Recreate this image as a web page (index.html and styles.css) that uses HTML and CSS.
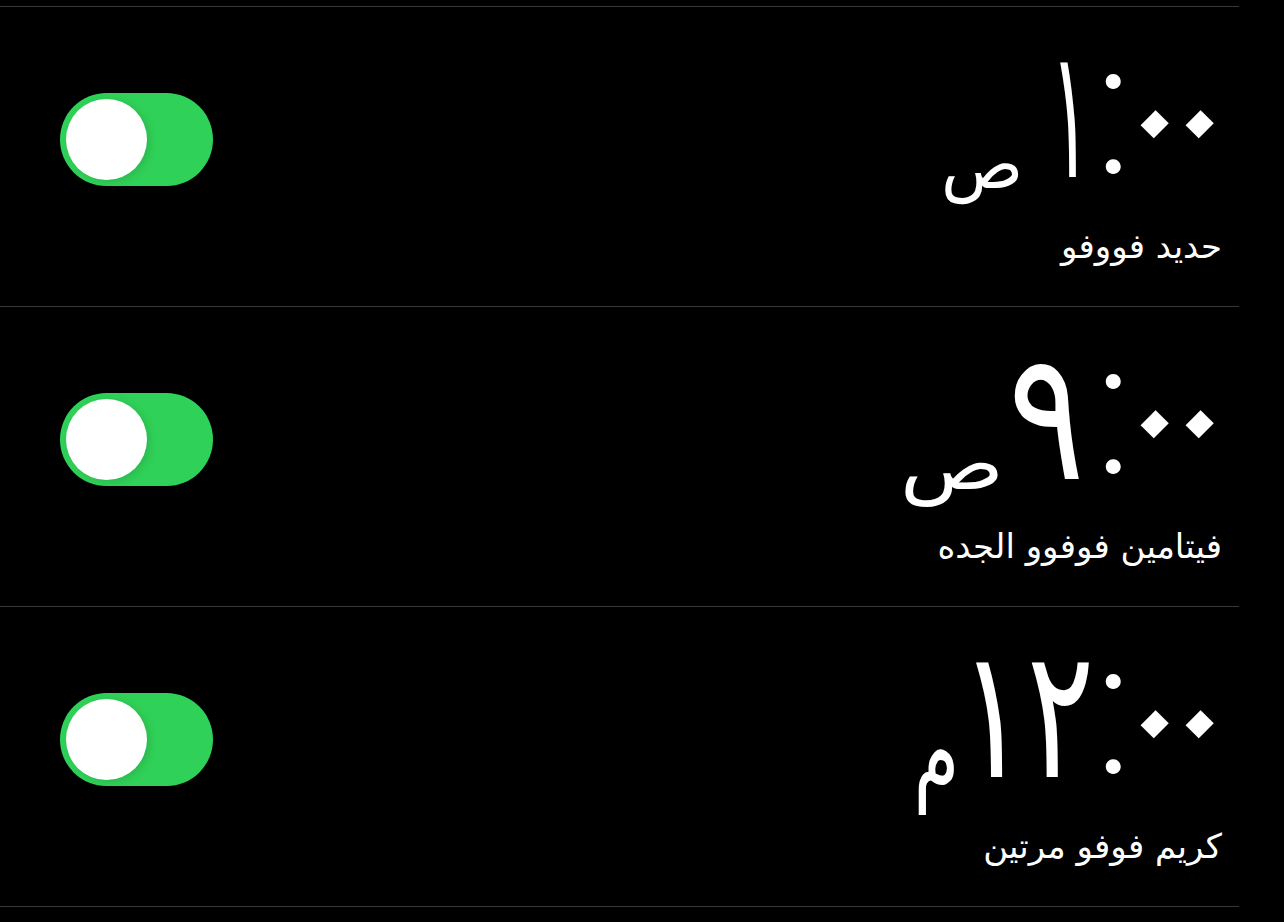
FILE: index.html
```html
<!DOCTYPE html>
<html lang="ar">
<head>
<meta charset="utf-8">
<link rel="stylesheet" href="styles.css">
</head>
<body>
<div class="list">
  <div class="row">
    <div class="toggle"><div class="knob"></div></div>
    <div class="info">
      <div class="time g1"><span class="num"><span class="hbox"><span class="h">١</span></span><span class="colon">:</span><span class="zbox"><span class="z">٠</span></span><span class="zbox"><span class="z">٠</span></span></span><span class="ap"><span class="apg">ص</span></span></div>
      <div class="label">حديد فووفو</div>
    </div>
  </div>
  <div class="row">
    <div class="toggle"><div class="knob"></div></div>
    <div class="info">
      <div class="time g2"><span class="num"><span class="hbox"><span class="h">٩</span></span><span class="colon">:</span><span class="zbox"><span class="z">٠</span></span><span class="zbox"><span class="z">٠</span></span></span><span class="ap"><span class="apg">ص</span></span></div>
      <div class="label">فيتامين فوفوو الجده</div>
    </div>
  </div>
  <div class="row">
    <div class="toggle"><div class="knob"></div></div>
    <div class="info">
      <div class="time g3"><span class="num"><span class="hbox"><span class="h">١٢</span></span><span class="colon">:</span><span class="zbox"><span class="z">٠</span></span><span class="zbox"><span class="z">٠</span></span></span><span class="ap"><span class="apg">م</span></span></div>
      <div class="label">كريم فوفو مرتين</div>
    </div>
  </div>
</div>
</body>
</html>
```
FILE: styles.css
```css
html, body {
  margin: 0;
  padding: 0;
  background: #000;
}
body {
  padding-top: 6px;
  font-family: "DejaVu Sans", sans-serif;
  color: #fff;
}
.list {
  width: 1239px;
  border-bottom: 1px solid #383838;
}
.row {
  height: 299px;
  border-top: 1px solid #383838;
  display: flex;
  align-items: flex-start;
}
.toggle {
  margin-left: 60px;
  margin-top: 86px;
  width: 153px;
  height: 93px;
  border-radius: 47px;
  background: #30d158;
  position: relative;
  flex: none;
}
.knob {
  position: absolute;
  left: 6px;
  top: 6px;
  width: 81px;
  height: 81px;
  border-radius: 50%;
  background: #fff;
  box-shadow: 3px 2px 8px rgba(0,0,0,0.12);
}
.info {
  margin-left: auto;
  padding-right: 17px;
  display: flex;
  flex-direction: column;
  align-items: flex-start;
  direction: rtl;
}
.time {
  display: flex;
  direction: rtl;
  align-items: flex-end;
  height: 232px;
  white-space: nowrap;
}
.g1 { gap: 22px; }
.g2 { gap: 0; }
.g3 { gap: 12px; }
.num {
  display: flex;
  direction: ltr;
  unicode-bidi: isolate;
  align-items: center;
  height: 232px;
}
.hbox {
  display: flex;
  justify-content: center;
  width: 43px;
}
.g2 .hbox { width: 85px; }
.g3 .hbox { width: 116px; }
.h {
  display: inline-block;
  font-size: 180px;
  line-height: 1;
  transform: translate(5px, -8px) scaleX(0.42);
}
.g2 .h { transform: translate(2px, -6px) scaleX(0.8); }
.g3 .h {
  letter-spacing: 8px;
  transform: translate(-2px, -8px) scaleX(0.7);
}
.colon {
  width: 45px;
  text-align: center;
  font-family: "Inter", "Lato", sans-serif;
  font-weight: 250;
  font-size: 190px;
  line-height: 1;
  transform: translateY(-19px);
}
.zbox {
  width: 45px;
  display: flex;
  justify-content: center;
}
.z {
  display: inline-block;
  font-size: 173px;
  line-height: 1;
  transform: translate(8px, -7px) rotate(45deg);
}
.ap {
  display: flex;
  justify-content: center;
  width: 80px;
  margin-bottom: 40px;
}
.g2 .ap { width: 100px; margin-bottom: 38px; }
.g3 .ap { width: 46px; margin-bottom: 33px; }
.apg {
  display: inline-block;
  font-size: 68px;
  line-height: 1;
}
.g2 .apg {
  font-size: 86px;
  transform: scaleY(0.85);
  transform-origin: 50% 90%;
}
.g3 .apg { font-size: 108px; transform: scaleX(0.68); }
.label {
  font-size: 34px;
  line-height: 1;
  margin-top: -10px;
}
```
